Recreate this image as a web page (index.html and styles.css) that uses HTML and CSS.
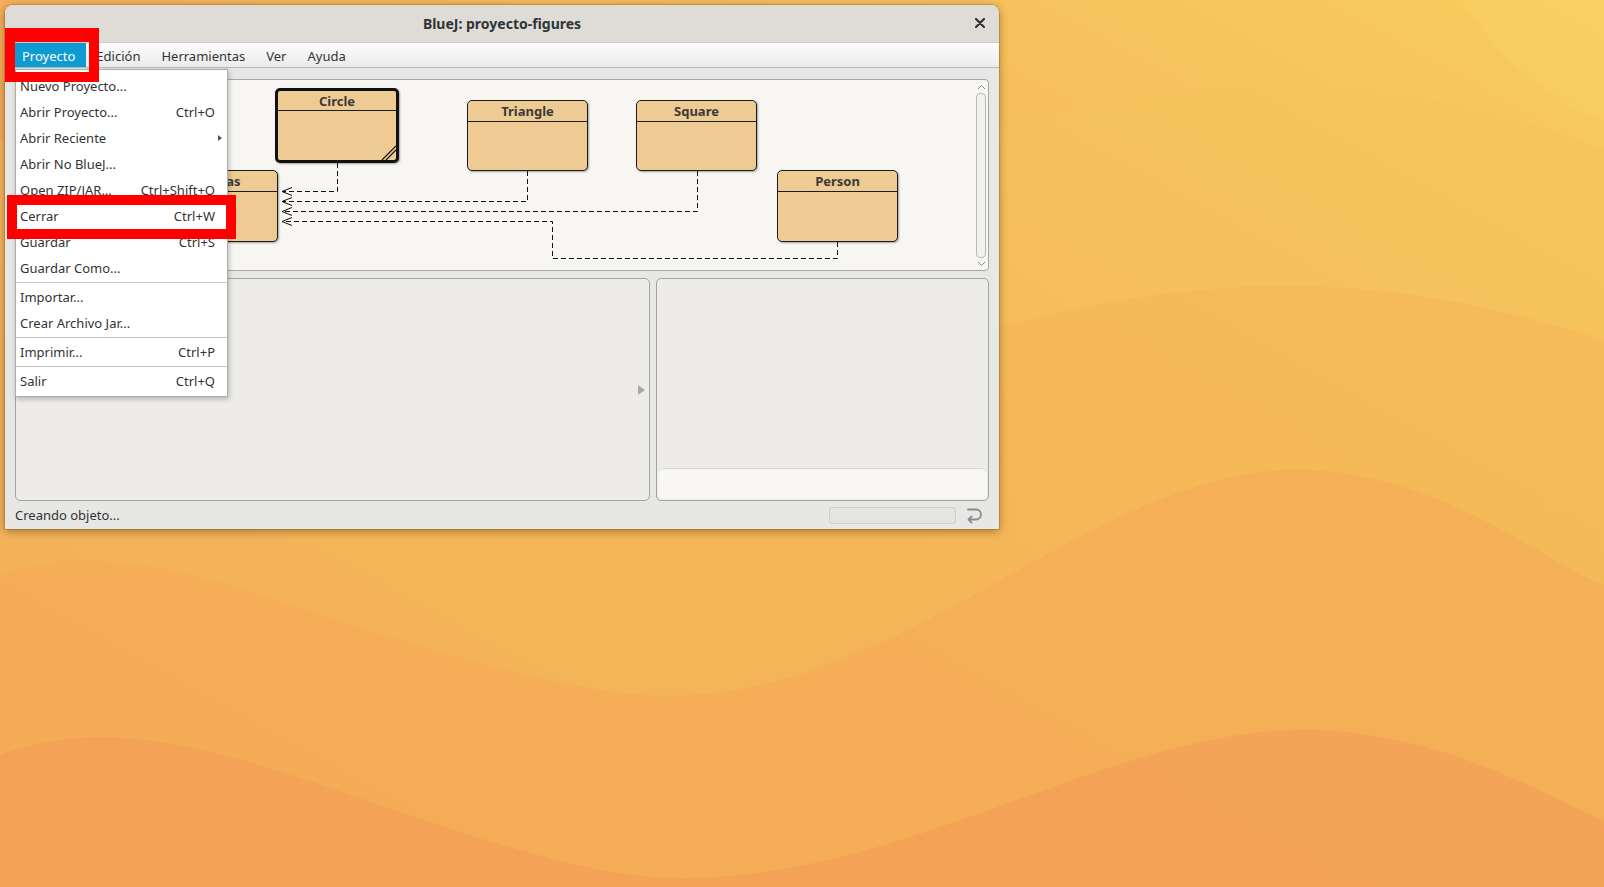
FILE: index.html
```html
<!DOCTYPE html>
<html lang="es">
<head>
<meta charset="utf-8">
<title>BlueJ: proyecto-figures</title>
<link rel="stylesheet" href="styles.css">
</head>
<body>
<div class="desktop">
  <svg class="wallpaper" width="1604" height="887" viewBox="0 0 1604 887" xmlns="http://www.w3.org/2000/svg">
    <defs>
      <linearGradient id="bg" x1="1" y1="0" x2="0" y2="1">
        <stop offset="0" stop-color="#f8cd5d"/>
        <stop offset="1" stop-color="#f39357"/>
      </linearGradient>
    </defs>
    <rect width="1604" height="887" fill="url(#bg)"/>
    <path d="M1460,0 C1500,60 1560,110 1604,120 L1604,0 Z" fill="#f9d063" opacity="0.6"/>
    <path d="M0,140 C300,60 520,210 820,160 C1100,110 1300,30 1604,150 L1604,887 L0,887 Z" fill="#f6c459" opacity="0.5"/>
    <path d="M0,340 C220,260 420,430 720,390 C1000,350 1200,210 1604,340 L1604,887 L0,887 Z" fill="#f5b456" opacity="0.45"/>
    <path d="M0,575 C160,520 320,640 600,690 C880,740 1080,460 1310,470 C1450,478 1540,560 1604,585 L1604,887 L0,887 Z" fill="#f5a756" opacity="0.5"/>
    <path d="M0,755 C170,690 360,820 600,870 C860,920 1100,720 1320,730 C1460,738 1550,800 1604,820 L1604,887 L0,887 Z" fill="#f39a56" opacity="0.55"/>
  </svg>

  <div class="window">
    <div class="titlebar">
      <span class="title">BlueJ: proyecto-figures</span>
      <svg class="close" width="10" height="10" viewBox="0 0 10 10"><path d="M1,1 L9,9 M9,1 L1,9" stroke="#2e3436" stroke-width="2.2" stroke-linecap="round"/></svg>
    </div>
    <div class="menubar">
      <span class="menu-item active">Proyecto</span>
      <span class="menu-item">Edición</span>
      <span class="menu-item">Herramientas</span>
      <span class="menu-item">Ver</span>
      <span class="menu-item">Ayuda</span>
    </div>
    <div class="content">
      <div class="diagram">
        <svg class="deps" width="958" height="190" viewBox="16 80 958 190" xmlns="http://www.w3.org/2000/svg">
          <g fill="none" stroke="#111" stroke-width="1" stroke-dasharray="5 3">
            <path d="M337.5,163 V191.5 H283"/>
            <path d="M527.5,171 V201.5 H283"/>
            <path d="M697.5,171 V211.5 H283"/>
            <path d="M837.5,242 V258.5 H552.5 V221.5 H283"/>
          </g>
          <g fill="none" stroke="#111" stroke-width="1">
            <path d="M292,187.5 L282,191.5 L292,195.5"/>
            <path d="M292,197.5 L282,201.5 L292,205.5"/>
            <path d="M292,207.5 L282,211.5 L292,215.5"/>
            <path d="M292,217.5 L282,221.5 L292,225.5"/>
          </g>
        </svg>
        <div class="cls cls-canvas"><div class="cls-head">Canvas</div></div>
        <div class="cls cls-circle selected">
          <div class="cls-head">Circle</div>
          <svg class="hatch" width="16" height="16" viewBox="0 0 16 16"><path d="M2,16 L16,2 M6,16 L16,6" stroke="#111" stroke-width="1.2"/></svg>
        </div>
        <div class="cls cls-triangle"><div class="cls-head">Triangle</div></div>
        <div class="cls cls-square"><div class="cls-head">Square</div></div>
        <div class="cls cls-person"><div class="cls-head">Person</div></div>
        <div class="vscroll">
          <svg class="chev" width="9" height="6" viewBox="0 0 9 6"><path d="M1,5 L4.5,1.5 L8,5" fill="none" stroke="#8a8a8a" stroke-width="1"/></svg>
          <div class="thumb"></div>
          <svg class="chev" width="9" height="6" viewBox="0 0 9 6"><path d="M1,1 L4.5,4.5 L8,1" fill="none" stroke="#8a8a8a" stroke-width="1"/></svg>
        </div>
      </div>
      <div class="panels">
        <div class="bench"><span class="bench-arrow"></span></div>
        <div class="codepad"><div class="codepad-input"></div></div>
      </div>
      <div class="statusbar">
        <span class="status-text">Creando objeto...</span>
        <div class="status-right">
          <div class="progress"></div>
          <svg class="return-icon" width="18" height="17" viewBox="0 0 18 17"><path d="M3,2.5 H11 A5,5 0 0 1 11,12.5 H3.5 M6.5,9.5 L3.5,12.5 L6.5,15.5" fill="none" stroke="#8c8c8c" stroke-width="1.8" stroke-linecap="round" stroke-linejoin="round"/></svg>
        </div>
      </div>
    </div>

    <div class="popup">
      <div class="pm-item"><span>Nuevo Proyecto...</span></div>
      <div class="pm-item"><span>Abrir Proyecto...</span><span>Ctrl+O</span></div>
      <div class="pm-item"><span>Abrir Reciente</span><span class="sub-arrow"></span></div>
      <div class="pm-item"><span>Abrir No BlueJ...</span></div>
      <div class="pm-item"><span>Open ZIP/JAR...</span><span>Ctrl+Shift+O</span></div>
      <div class="pm-item"><span>Cerrar</span><span>Ctrl+W</span></div>
      <div class="pm-item"><span>Guardar</span><span>Ctrl+S</span></div>
      <div class="pm-item"><span>Guardar Como...</span></div>
      <div class="pm-sep"></div>
      <div class="pm-item"><span>Importar...</span></div>
      <div class="pm-item"><span>Crear Archivo Jar...</span></div>
      <div class="pm-sep"></div>
      <div class="pm-item"><span>Imprimir...</span><span>Ctrl+P</span></div>
      <div class="pm-sep"></div>
      <div class="pm-item"><span>Salir</span><span>Ctrl+Q</span></div>
    </div>
  </div>

  <div class="mark mark-proyecto"></div>
  <div class="mark mark-cerrar"></div>
</div>
</body>
</html>
```
FILE: styles.css
```css
* { box-sizing: border-box; }
html, body { margin: 0; padding: 0; }
body {
  width: 1604px;
  height: 887px;
  overflow: hidden;
  font-family: "Noto Sans", "Open Sans", sans-serif;
  font-size: 13px;
  color: #333;
}
.desktop { position: relative; width: 1604px; height: 887px; }
.wallpaper { position: absolute; left: 0; top: 0; display: block; }

.window {
  position: absolute;
  left: 5px;
  top: 5px;
  width: 994px;
  height: 524px;
  background: #e7e7e6;
  border-radius: 8px 8px 0 0;
  box-shadow: 0 2px 10px rgba(60, 30, 0, 0.45), 0 0 0 1px rgba(0,0,0,0.12);
  display: flex;
  flex-direction: column;
}

.titlebar {
  height: 37px;
  flex: none;
  background: #dfdcd8;
  border-radius: 8px 8px 0 0;
  display: flex;
  align-items: center;
  justify-content: center;
  position: relative;
}
.title { font-weight: 700; font-size: 14px; color: #2e3436; }
.close { position: absolute; right: 14px; top: 13px; }

.menubar {
  height: 26px;
  flex: none;
  display: flex;
  align-items: stretch;
  padding-left: 10px;
  gap: 3px;
  background: linear-gradient(#fcfcfc, #ebebeb);
  border-top: 1px solid #cfcdca;
  border-bottom: 1px solid #b9b9b9;
}
.menu-item {
  display: flex;
  align-items: center;
  padding: 1px 9px 0 9px;
  color: #333;
}
.menu-item.active {
  background: #0e9bd4;
  color: #fff;
  padding-left: 7px;
  padding-right: 11px;
  margin-right: -2px;
}

.content {
  flex: 1;
  display: flex;
  flex-direction: column;
  padding: 11px 10px 0 10px;
}

.diagram {
  position: relative;
  height: 192px;
  flex: none;
  background: #f7f6f2;
  border: 1px solid #a6a6a6;
  border-radius: 4px;
  overflow: hidden;
}
.deps { position: absolute; left: 0; top: 0; display: block; }

.cls {
  position: absolute;
  width: 121px;
  background: #efcb94;
  border: 1px solid #1c1c1c;
  border-radius: 5px;
  box-shadow: 1px 1px 2px rgba(0,0,0,0.35);
}
.cls-head {
  height: 21px;
  border-bottom: 1px solid #1c1c1c;
  text-align: center;
  font-weight: 700;
  font-size: 13px;
  line-height: 20px;
  color: #3a3a3a;
}
.cls.selected { border: 3px solid #111; width: 124px; }
.cls.selected .cls-head { height: 20px; line-height: 20px; }
.hatch { position: absolute; right: 0; bottom: 0; }

.cls-canvas { left: 141px; top: 90px; height: 72px; }
.cls-circle { left: 259px; top: 8px; height: 75px; }
.cls-triangle { left: 451px; top: 20px; height: 71px; }
.cls-square { left: 620px; top: 20px; height: 71px; }
.cls-person { left: 761px; top: 90px; height: 72px; }

.vscroll {
  position: absolute;
  right: 0;
  top: 0;
  bottom: 0;
  width: 14px;
  display: flex;
  flex-direction: column;
  align-items: center;
  padding: 4px 0 3px;
  gap: 3px;
}
.chev { display: block; flex: none; }
.thumb {
  flex: 1;
  width: 10px;
  border: 1px solid #b8b8b8;
  border-radius: 4px;
  background: #f2f1ee;
}

.panels {
  margin-top: 7px;
  height: 223px;
  flex: none;
  display: grid;
  grid-template-columns: 635px 1fr;
  gap: 6px;
}
.bench {
  background: #edece8;
  border: 1px solid #a3a3a3;
  border-radius: 5px;
  display: flex;
  align-items: center;
  justify-content: flex-end;
  padding-right: 4px;
}
.bench-arrow {
  width: 0; height: 0;
  border-left: 7px solid #a9a9a9;
  border-top: 5px solid transparent;
  border-bottom: 5px solid transparent;
}
.codepad {
  background: #edece8;
  border: 1px solid #a3a3a3;
  border-radius: 5px;
  display: flex;
  flex-direction: column;
  justify-content: flex-end;
  padding: 1px;
}
.codepad-input {
  height: 31px;
  background: #f8f7f3;
  border-top: 1px solid #d6d6d3;
  border-radius: 6px;
}

.statusbar {
  flex: 1;
  display: flex;
  align-items: center;
  justify-content: space-between;
  padding-right: 6px;
}
.status-text { color: #333; }
.status-right { display: flex; align-items: center; gap: 9px; }
.progress {
  width: 127px;
  height: 17px;
  border: 1px solid #cfcfcf;
  border-radius: 3px;
  background: #e4e4e3;
}
.return-icon { display: block; }

.popup {
  position: absolute;
  left: 10px;
  top: 64px;
  width: 213px;
  background: #fff;
  border: 1px solid #adadad;
  box-shadow: 1px 2px 5px rgba(0,0,0,0.25);
  padding: 3px 0 2px;
  z-index: 5;
}
.pm-item {
  height: 26px;
  display: flex;
  align-items: center;
  justify-content: space-between;
  padding: 0 12px 0 4px;
  color: #333;
  position: relative;
}
.sub-arrow {
  width: 0; height: 0;
  border-left: 4px solid #555;
  border-top: 3.5px solid transparent;
  border-bottom: 3.5px solid transparent;
  margin-right: -7px;
}
.pm-sep { height: 3px; display: flex; align-items: center; }
.pm-sep::before { content: ""; flex: 1; height: 1px; background: #c6c6c6; }

.mark {
  position: absolute;
  border: 10px solid #ff0000;
  z-index: 10;
}
.mark-proyecto { left: 5px; top: 28px; width: 94px; height: 54px; border-top-width: 14px; }
.mark-cerrar { left: 7px; top: 195px; width: 229px; height: 44px; }
```
